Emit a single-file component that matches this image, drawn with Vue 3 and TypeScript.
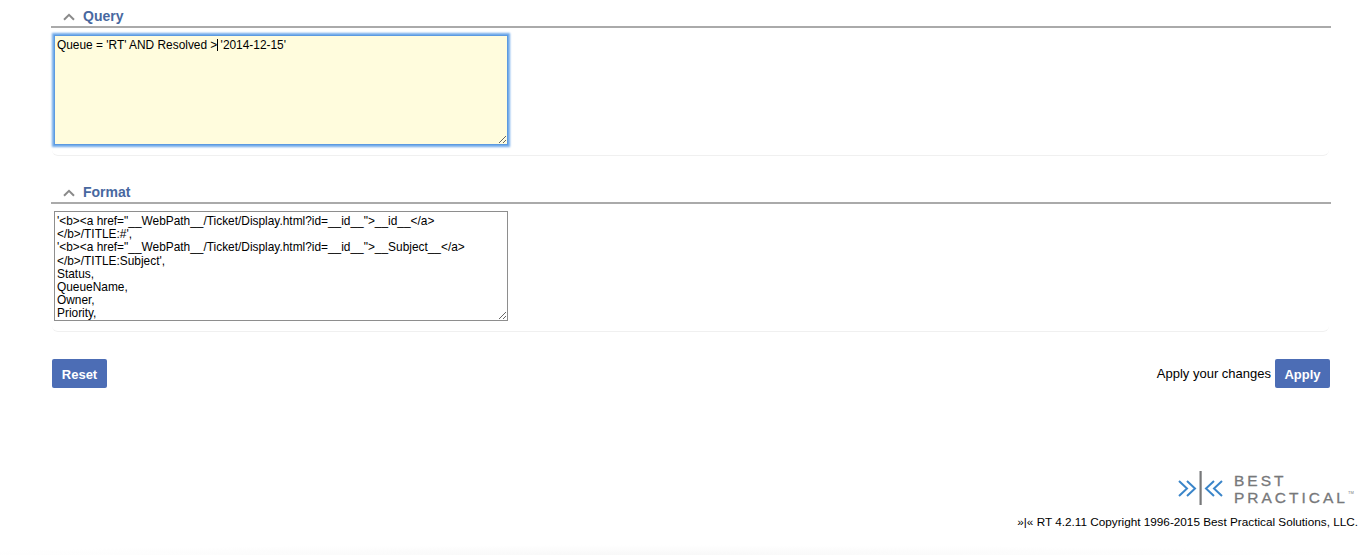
<script setup lang="ts">
const queryText = "Queue = 'RT' AND Resolved > '2014-12-15'"
const formatText = `'<b><a href="__WebPath__/Ticket/Display.html?id=__id__">__id__</a></b>/TITLE:#',
'<b><a href="__WebPath__/Ticket/Display.html?id=__id__">__Subject__</a></b>/TITLE:Subject',
Status,
QueueName,
Owner,
Priority,
'__NEWLINE__',
'__NBSP__',
'<small>__Requestors__</small>',
'<small>__CreatedRelative__</small>',
'<small>__ToldRelative__</small>',
'<small>__LastUpdatedRelative__</small>',
'<small>__TimeLeft__</small>'`
</script>

<template>
  <div class="page">
    <section class="panel">
      <h2 class="title">
        <svg class="chev" width="12" height="8" viewBox="0 0 12 8"><path d="M1 6.8 6 1.8 11 6.8" fill="none" stroke="#8a8a8a" stroke-width="2" /></svg>
        <span>Query</span>
      </h2>
      <div class="body">
        <textarea class="box query" :value="queryText" spellcheck="false"></textarea>
        <span class="caret"></span>
      </div>
    </section>
    <section class="panel second">
      <h2 class="title">
        <svg class="chev" width="12" height="8" viewBox="0 0 12 8"><path d="M1 6.8 6 1.8 11 6.8" fill="none" stroke="#8a8a8a" stroke-width="2" /></svg>
        <span>Format</span>
      </h2>
      <div class="body">
        <textarea class="box format" :value="formatText" spellcheck="false"></textarea>
      </div>
    </section>
    <div class="actions">
      <button class="btn" type="button">Reset</button>
      <div class="apply">
        <span>Apply your changes</span>
        <button class="btn" type="button">Apply</button>
      </div>
    </div>
    <footer class="foot">
      <div class="logo">
        <svg width="50" height="34" viewBox="0 0 50 34">
          <path d="M1 10 9 17.5 1 25M9 10 17 17.5 9 25" fill="none" stroke="#3a85c9" stroke-width="2" />
          <rect x="21.5" y="0" width="2.2" height="34" fill="#77787a" />
          <path d="M36 10 28 17.5 36 25M44 10 36 17.5 44 25" fill="none" stroke="#3a85c9" stroke-width="2" />
        </svg>
        <div class="word">
          <div>BEST</div>
          <div>PRACTICAL<sup>TM</sup></div>
        </div>
      </div>
      <p class="copy">»|« RT 4.2.11 Copyright 1996-2015 Best Practical Solutions, LLC.</p>
    </footer>
  </div>
</template>

<style>
html, body { margin: 0; background: #fff; }
</style>

<style scoped>
.page {
  height: 555px;
  box-sizing: border-box;
  overflow: hidden;
  padding: 8px 8px 0 51px;
  font-family: "Liberation Sans", Arial, sans-serif;
  font-size: 12px;
  color: #000;
  background: radial-gradient(ellipse 720px 10px at 640px 100%, #f8f8f8, #fff);
}
.panel { width: 1280px; }
.second { margin-top: 28px; }
.title {
  margin: 0;
  height: 20px;
  box-sizing: border-box;
  border-bottom: 2px solid #aaa;
  display: flex;
  align-items: center;
  gap: 8px;
  padding: 0 0 2px 12px;
  font-size: 14px;
  line-height: 16px;
  font-weight: bold;
  color: #4868a0;
}
.chev { margin-top: 1px; }
.body {
  position: relative;
  margin: 0 2px 0 1px;
  padding: 7px 0 10px 2px;
  border-bottom: 1px solid #f0f0f0;
  border-radius: 0 0 6px 6px;
  display: flex;
}
.box {
  display: block;
  width: 454px;
  height: 110px;
  box-sizing: border-box;
  margin: 0;
  padding: 3px 2px 2px;
  border: 1px solid #8e8e8e;
  font-family: "Liberation Sans", Arial, sans-serif;
  font-size: 11.9px;
  line-height: 13.2px;
  color: #000;
  outline: none;
  resize: both;
}
.query {
  background: #fffcdd;
  border-color: #5c9ae0;
  box-shadow: 0 0 2px 2px #6ea9ea;
}
.format { background: #fff; }
.caret {
  position: absolute;
  left: 165px;
  top: 11px;
  width: 1px;
  height: 12px;
  background: #000;
}
.actions {
  width: 1278px;
  margin: 27px 0 0 1px;
  display: flex;
  justify-content: space-between;
  align-items: center;
}
.apply {
  display: flex;
  align-items: center;
  gap: 4px;
  font-size: 13px;
}
.btn {
  width: 55px;
  height: 29px;
  padding: 1px 0 0;
  border: none;
  border-radius: 2px;
  background: #4c6db5;
  color: #fff;
  font-family: "Liberation Sans", Arial, sans-serif;
  font-size: 13px;
  font-weight: bold;
}
.foot {
  margin: 83px 0 0 auto;
  width: 1307px;
  display: flex;
  flex-direction: column;
  align-items: flex-end;
}
.logo {
  display: flex;
  align-items: center;
  gap: 6px;
  height: 34px;
  width: 180px;
}
.word {
  margin-top: 2px;
  font-size: 15.5px;
  line-height: 17px;
  letter-spacing: 3px;
  color: #77787a;
  white-space: nowrap;
  -webkit-text-stroke: 0.3px #77787a;
}
.word sup { font-size: 4px; letter-spacing: 0; vertical-align: 9px; line-height: 0; -webkit-text-stroke: 0; }
.copy {
  margin: 10px 0 0;
  font-size: 11.75px;
  line-height: 14px;
}
</style>
